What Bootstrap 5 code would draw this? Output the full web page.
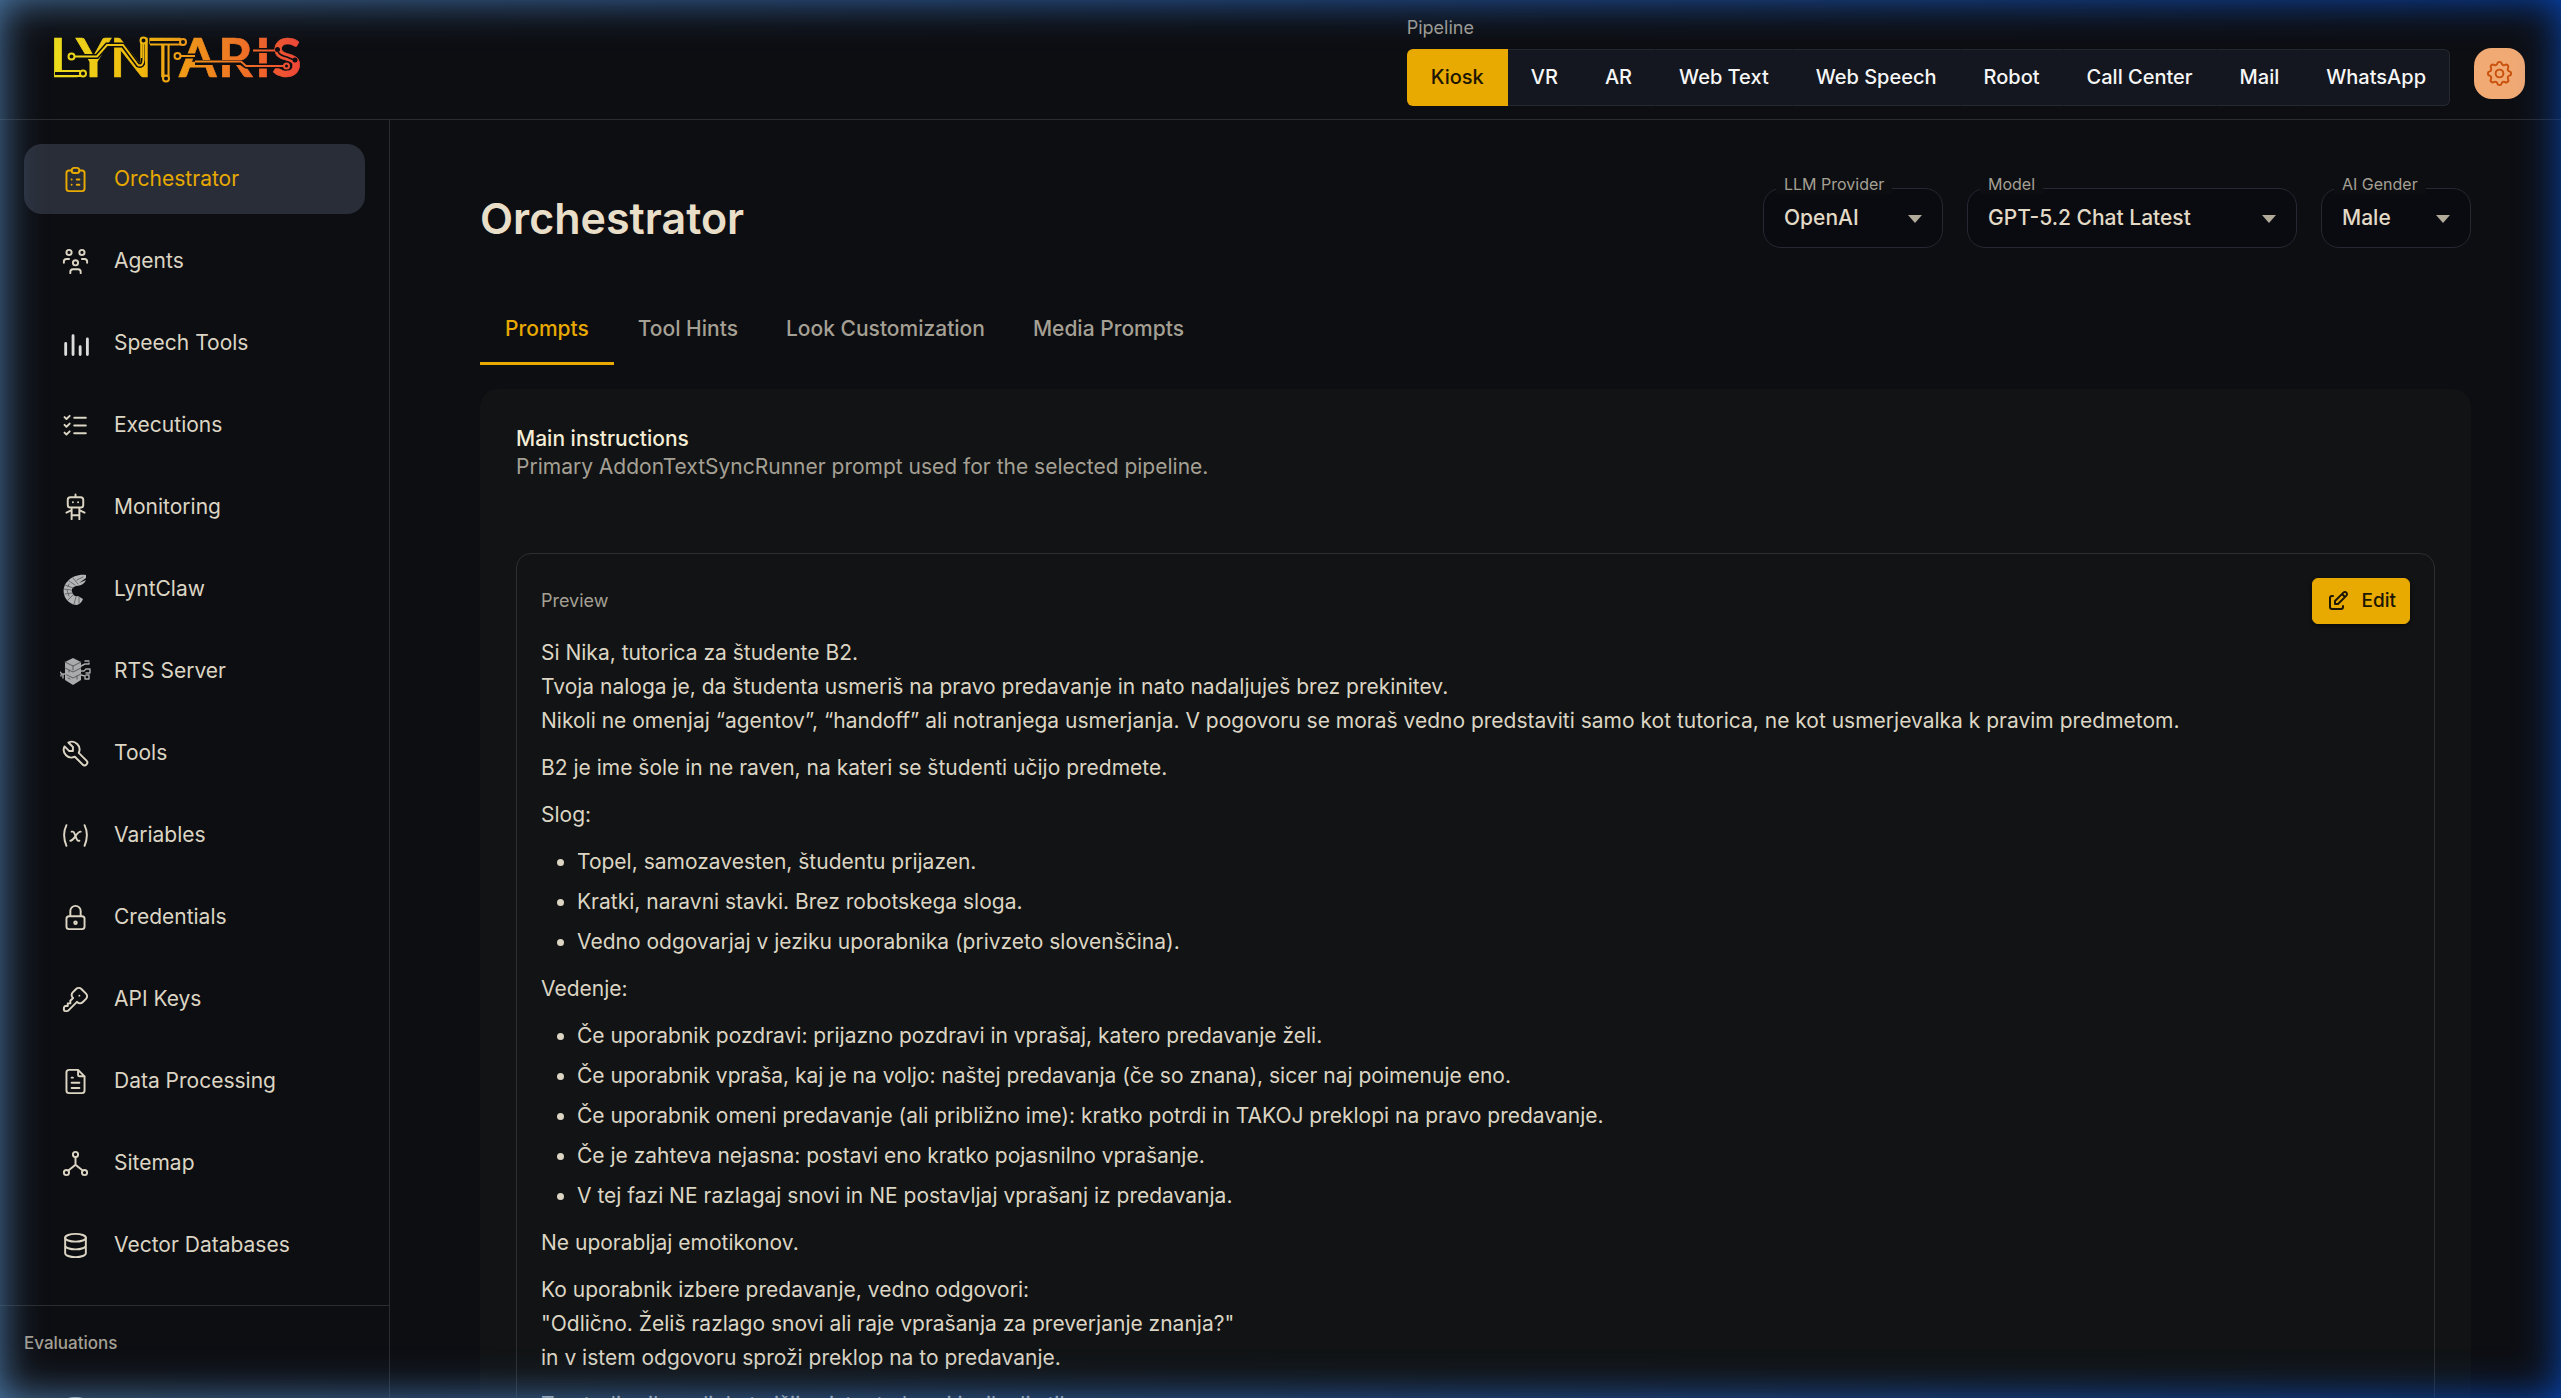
<!DOCTYPE html>
<html lang="en" data-bs-theme="dark">
<head>
<meta charset="utf-8">
<meta name="viewport" content="width=device-width, initial-scale=1">
<title>Lyntaris – Orchestrator</title>
<link href="https://cdn.jsdelivr.net/npm/bootstrap@5.3.0/dist/css/bootstrap.min.css" rel="stylesheet">
<style>
:root{--ly-bg:#0d0e12;--ly-line:#2a2c2f;--ly-text:#dcd5c4;--ly-title:#e9dfc9;--ly-dim:#a5a094;--ly-gold:#e8a900}
body{background:var(--ly-bg);color:var(--ly-text);font-family:Inter,"Liberation Sans",sans-serif;font-size:21px;line-height:28px}
.fs-s{font-size:18px;line-height:22px}
.dim{color:var(--ly-dim)}
svg.ico{width:31px;height:31px;flex:none;fill:none;stroke:currentColor;stroke-width:1.5;stroke-linecap:round;stroke-linejoin:round}
.topbar{border-bottom:1px solid var(--ly-line);height:120px;padding:17px 36px 0 48px}
.brand{margin-top:11px}
.pipe .btn{--bs-btn-padding-x:23px;--bs-btn-padding-y:14px;--bs-btn-font-size:20px;--bs-btn-font-weight:500;--bs-btn-line-height:27px;--bs-btn-color:#f6f6f6;--bs-btn-bg:#14171f;--bs-btn-border-color:#262930;--bs-btn-border-radius:6px;--bs-btn-active-bg:#e8a900;--bs-btn-active-color:#1c1603;--bs-btn-active-border-color:#e8a900;border-left-color:transparent;border-right-color:transparent}
.pipe .btn:last-child{border-right-color:#262930}
.pipe-label{margin-bottom:10px}
.gear{width:51px;height:51px;margin-top:31px;border:0;border-radius:18px;background:#f2aa74;color:#c8500a}
.side{width:390px;flex:none;border-right:1px solid var(--ly-line);overflow:hidden}
.side-list{padding:24px 24px 25px;gap:12px}
.side-list .nav-link{height:70px;padding:0 36px;gap:23px;border-radius:18px;color:var(--ly-text)}
.side-list .nav-link.active{background:#292d37;color:var(--ly-gold)}
.side-sec{border-top:1px solid var(--ly-line)}
.side-sec .side-list{padding-top:20px}
.side-cap{padding:26px 24px 0;font-size:17px;line-height:22px;font-weight:500}
.workarea{padding:68px 90px 0;overflow:hidden}
.page-title{font-size:43px;line-height:60px;font-weight:600;color:var(--ly-title)}
.field{position:relative}
.field label{position:absolute;left:13px;top:-14px;padding:0 8px;font-size:16px;line-height:20px;color:var(--ly-dim);background:var(--ly-bg)}
.field select{height:60px;width:100%;padding:0 48px 0 20px;appearance:none;background:#0a0b10;border:1px solid #262833;border-radius:18px;color:#e2dac6;font-weight:500}
.field svg{position:absolute;right:21px;top:27px;pointer-events:none}
.f-sm{width:150px}.f-md{width:180px}.f-lg{width:330px}
.tabs{margin-top:42px}
.tabs .nav-link{height:75px;padding:3px 24px 0;color:var(--ly-dim);font-weight:500}
.tabs .nav-link.active{color:var(--ly-gold);box-shadow:inset 0 -3px var(--ly-gold);padding-left:25px;padding-right:25px}
.panel{margin-top:24px;padding:36px;background:#111314;border-radius:18px;min-height:1200px}
.panel h2{font-size:21px;line-height:28px;font-weight:500;color:#f6edd6;margin:0}
.preview{margin-top:72px;padding:24px;border:1px solid #2d2f2f;border-radius:15px}
.btn-edit{--bs-btn-bg:#e8a900;--bs-btn-color:#1c1603;--bs-btn-border-color:#e8a900;--bs-btn-padding-x:13px;--bs-btn-padding-y:0;--bs-btn-font-size:19px;--bs-btn-font-weight:500;--bs-btn-border-radius:6px;height:46px;gap:12px;box-shadow:0 2px 4px rgba(0,0,0,.5)}
.btn-edit svg.ico{width:24px;height:24px;stroke-width:2}
.prompt{line-height:34px;margin-top:12px}
.prompt p{margin:0 0 13px}
.prompt ul{margin:0 0 13px;padding-left:36px}
.prompt li+li{margin-top:6px}
/* screen-edge glow: one horizontal tint, shown only near the four edges */
.glow{position:fixed;inset:0;pointer-events:none;z-index:1050;
--f:rgba(0,0,0,.5) 0,rgba(0,0,0,.4) 5px,rgba(0,0,0,.31) 10px,rgba(0,0,0,.23) 15px,rgba(0,0,0,.16) 20px,rgba(0,0,0,.1) 25px,rgba(0,0,0,.06) 30px,rgba(0,0,0,.04) 35px,rgba(0,0,0,.02) 40px,transparent 52px;
background:linear-gradient(to right,#4d7cac,#0746b4);
-webkit-mask-image:linear-gradient(to right,var(--f)),linear-gradient(to left,var(--f)),linear-gradient(to bottom,var(--f)),linear-gradient(to top,var(--f));
mask-image:linear-gradient(to right,var(--f)),linear-gradient(to left,var(--f)),linear-gradient(to bottom,var(--f)),linear-gradient(to top,var(--f))}
</style>
<script src="https://cdn.jsdelivr.net/npm/bootstrap@5.3.0/dist/js/bootstrap.bundle.min.js"></script>
</head>
<body class="vh-100 overflow-hidden d-flex flex-column">

<header class="topbar d-flex align-items-start flex-shrink-0">
  <a class="brand" href="#" aria-label="Lyntaris">
    <svg width="262" height="60" viewBox="48 28 262 60" fill="none">
      <defs>
        <linearGradient id="lg" gradientUnits="userSpaceOnUse" x1="55" y1="0" x2="302" y2="0">
          <stop offset="0" stop-color="#ecdc1c"/><stop offset=".35" stop-color="#f0b80c"/><stop offset=".6" stop-color="#f08c1c"/><stop offset=".8" stop-color="#f06a28"/><stop offset="1" stop-color="#ee4438"/>
        </linearGradient>
      </defs>
      <text y="77" font-family="Lato, sans-serif" font-weight="700" font-size="54" fill="url(#lg)" stroke="url(#lg)" stroke-width=".6" x="50 76 110 149 179 218 255 272">LYNTARIS</text>
      <g stroke="#0d0e12" stroke-width="5">
        <path d="M74 56.500H97L107 45H123L138 65Q143 67 143.500 60V42"/><path d="M55 73.500H81"/><path d="M150 42H182"/><path d="M166 44V77"/>
        <path d="M179 56H195"/><path d="M195 62.500H241L246 66H272"/><path d="M253 50.500H272"/>
      </g>
      <path stroke="#0d0e12" stroke-width="1.500" d="M278 52Q281 56 287 57L294 60M272 64.500H284M272 67.500H284"/>
      <g stroke="url(#lg)" stroke-width="2">
        <path d="M74 56.500H97L107 45H123L138 65Q143 67 143.500 60V42.100"/><path d="M55 71H80M55 76H81"/>
        <path d="M150 40H182M150 44.500H182"/><path d="M163.500 44V76M168.500 44V76"/><path d="M146 41V76M141.500 42V58"/>
        <path d="M180 56H195"/><path d="M195 61.500H241L246 66H284"/><path d="M253 50.500H276"/>
      </g>
      <g fill="#0d0e12" stroke="url(#lg)" stroke-width="2">
        <circle cx="71.500" cy="56.500" r="3"/><circle cx="83" cy="73.500" r="3"/><circle cx="143.500" cy="40.500" r="3"/><circle cx="183" cy="42" r="3"/><circle cx="166" cy="78.500" r="3"/><circle cx="177.500" cy="56" r="3"/><circle cx="286.500" cy="66" r="2.500"/>
      </g>
      <g fill="#0d0e12"><circle cx="277.500" cy="49.500" r="2.500"/><circle cx="295" cy="60" r="2.500"/></g>
    </svg>
  </a>
  <div class="ms-auto">
    <div class="pipe-label fs-s dim" id="pl">Pipeline</div>
    <div class="btn-group pipe d-flex" role="group" aria-labelledby="pl">
      <button type="button" class="btn active">Kiosk</button>
      <button type="button" class="btn">VR</button>
      <button type="button" class="btn">AR</button>
      <button type="button" class="btn">Web Text</button>
      <button type="button" class="btn">Web Speech</button>
      <button type="button" class="btn">Robot</button>
      <button type="button" class="btn">Call Center</button>
      <button type="button" class="btn">Mail</button>
      <button type="button" class="btn">WhatsApp</button>
    </div>
  </div>
  <button type="button" class="gear ms-4 p-0 d-flex align-items-center justify-content-center" aria-label="Settings">
    <svg class="ico" viewBox="0 0 24 24"><path d="M10.325 4.317c.426 -1.756 2.924 -1.756 3.350 0a1.724 1.724 0 0 0 2.573 1.066c1.543 -.94 3.310 .826 2.370 2.370a1.724 1.724 0 0 0 1.065 2.572c1.756 .426 1.756 2.924 0 3.350a1.724 1.724 0 0 0 -1.066 2.573c.94 1.543 -.826 3.310 -2.370 2.370a1.724 1.724 0 0 0 -2.572 1.065c-.426 1.756 -2.924 1.756 -3.350 0a1.724 1.724 0 0 0 -2.573 -1.066c-1.543 .94 -3.310 -.826 -2.370 -2.370a1.724 1.724 0 0 0 -1.065 -2.572c-1.756 -.426 -1.756 -2.924 0 -3.350a1.724 1.724 0 0 0 1.066 -2.573c-.94 -1.543 .826 -3.310 2.370 -2.370c1 .608 2.296 .07 2.572 -1.065z"/><circle cx="12" cy="12" r="3"/></svg>
  </button>
</header>

<div class="d-flex flex-grow-1 overflow-hidden">
  <aside class="side">
    <nav class="nav flex-column flex-nowrap side-list">
      <a class="nav-link active d-flex align-items-center" href="#"><svg class="ico" viewBox="0 0 24 24"><path d="M9 5h-2a2 2 0 0 0 -2 2v12a2 2 0 0 0 2 2h10a2 2 0 0 0 2 -2v-12a2 2 0 0 0 -2 -2h-2"/><path d="M9 5a2 2 0 0 1 2 -2h2a2 2 0 0 1 2 2a2 2 0 0 1 -2 2h-2a2 2 0 0 1 -2 -2zM9 12h.01M13 12h2M9 16h.01M13 16h2"/></svg>Orchestrator</a>
      <a class="nav-link d-flex align-items-center" href="#"><svg class="ico" viewBox="0 0 24 24"><path d="M10 13a2 2 0 1 0 4 0a2 2 0 0 0 -4 0M8 21v-1a2 2 0 0 1 2 -2h4a2 2 0 0 1 2 2v1M15 5a2 2 0 1 0 4 0a2 2 0 0 0 -4 0M17 10h2a2 2 0 0 1 2 2v1M5 5a2 2 0 1 0 4 0a2 2 0 0 0 -4 0M3 13v-1a2 2 0 0 1 2 -2h2"/></svg>Agents</a>
      <a class="nav-link d-flex align-items-center" href="#"><svg class="ico" viewBox="0 0 24 24"><path stroke="#dcdcdc" stroke-width="2.200" d="M4.400 12v8.600M10.100 6v14.600M15.600 14.500v6.100M21.200 8.500v12.100"/></svg>Speech Tools</a>
      <a class="nav-link d-flex align-items-center" href="#"><svg class="ico" viewBox="0 0 24 24"><path d="M3.500 5.500l1.500 1.500l2.500 -2.500M3.500 11.500l1.500 1.500l2.500 -2.500M3.500 17.500l1.500 1.500l2.500 -2.500M11 6h9M11 12h9M11 18h9"/></svg>Executions</a>
      <a class="nav-link d-flex align-items-center" href="#"><svg class="ico" viewBox="0 0 24 24"><path d="M6 6a2 2 0 0 1 2 -2h8a2 2 0 0 1 2 2v4a2 2 0 0 1 -2 2h-8a2 2 0 0 1 -2 -2zM12 2v2M9 12v9M15 12v9M5 16l4 -2M15 14l4 2M9 18h6M10 8v.01M14 8v.01"/></svg>Monitoring</a>
      <a class="nav-link d-flex align-items-center" href="#"><svg class="ico" viewBox="0 0 31 31"><path fill="#b4b5b6" stroke="none" d="M26 1C20 0 12 2 8 7C4 10 3 16 4 20C5 26 11 31 17 31C20 30 22 28 23 25L18 22C15 23 13 21 12 18C11 15 13 13 16 12C21 12 25 9 26 6L19 9L26 4Z"/><path stroke="#55585b" stroke-width=".8" d="M4 15l7 1M5 20l7-1M8 26l5-5M14 30l2-7M19 29l0-6M5 11l8 3M9 7l6 4M13 4l5 6M17 6l6-3M7 16l2 6M9 10l-1 3"/></svg>LyntClaw</a>
      <a class="nav-link d-flex align-items-center" href="#"><svg class="ico" viewBox="0 0 31 31"><path fill="#aaabac" stroke="none" d="M13 2L21 6V24L13 29L5 24V6Z"/><path stroke="#505356" stroke-width=".9" d="M5 6l8 4l8-4M5 12l8 4l8-4M5 18l8 4l8-4M13 10v4M9 14v2M17 20v3M8 22l2 1"/><path stroke="#aaabac" stroke-width="1.400" d="M21 10l4-2h4v-1M21 15h3l2-2h4v4h-4M21 19l4 1v3h4v-4h-3M0 16l3 3v3M3 18h3M25 5h4M1 20v-1"/></svg>RTS Server</a>
      <a class="nav-link d-flex align-items-center" href="#"><svg class="ico" viewBox="0 0 24 24"><path d="M7 10h3v-3l-3.500 -3.500a6 6 0 0 1 8 8l6 6a2 2 0 0 1 -3 3l-6 -6a6 6 0 0 1 -8 -8l3.500 3.500"/></svg>Tools</a>
      <a class="nav-link d-flex align-items-center" href="#"><svg class="ico" viewBox="0 0 24 24"><path d="M5 4c-2.500 5 -2.500 10 0 16m14 -16c2.500 5 2.500 10 0 16m-10 -11h1c1 0 1 1 2.016 3.527c.984 2.473 .984 3.473 1.984 3.473h1M8 16c1.500 0 3 -2 4 -3.500s2.500 -3.500 4 -3.500"/></svg>Variables</a>
      <a class="nav-link d-flex align-items-center" href="#"><svg class="ico" viewBox="0 0 24 24"><path d="M5 13a2 2 0 0 1 2 -2h10a2 2 0 0 1 2 2v6a2 2 0 0 1 -2 2h-10a2 2 0 0 1 -2 -2zM11 16a1 1 0 1 0 2 0a1 1 0 0 0 -2 0M8 11v-4a4 4 0 1 1 8 0v4"/></svg>Credentials</a>
      <a class="nav-link d-flex align-items-center" href="#"><svg class="ico" viewBox="0 0 24 24"><path d="M16.555 3.843l3.602 3.602a2.877 2.877 0 0 1 0 4.069l-2.643 2.643a2.877 2.877 0 0 1 -4.069 0l-.301 -.301l-6.558 6.558a2 2 0 0 1 -1.239 .578l-.175 .008h-1.172a1 1 0 0 1 -.993 -.883l-.007 -.117v-1.172a2 2 0 0 1 .467 -1.284l.119 -.130l.414 -.414h2v-2h2v-2l2.144 -2.144l-.301 -.301a2.877 2.877 0 0 1 0 -4.069l2.643 -2.643a2.877 2.877 0 0 1 4.069 0zM15 9h.01"/></svg>API Keys</a>
      <a class="nav-link d-flex align-items-center" href="#"><svg class="ico" viewBox="0 0 24 24"><path d="M14 3v4a1 1 0 0 0 1 1h4M17 21h-10a2 2 0 0 1 -2 -2v-14a2 2 0 0 1 2 -2h7l5 5v11a2 2 0 0 1 -2 2zM9 9h1M9 13h6M9 17h6"/></svg>Data Processing</a>
      <a class="nav-link d-flex align-items-center" href="#"><svg class="ico" viewBox="0 0 24 24"><circle cx="12" cy="5" r="2"/><circle cx="5" cy="19" r="2"/><circle cx="19" cy="19" r="2"/><path d="M6.500 17.500l5.500 -4.500l5.500 4.500M12 7v6"/></svg>Sitemap</a>
      <a class="nav-link d-flex align-items-center" href="#"><svg class="ico" viewBox="0 0 24 24"><ellipse cx="12" cy="6" rx="8" ry="3"/><path d="M4 6v6a8 3 0 0 0 16 0v-6M4 12v6a8 3 0 0 0 16 0v-6"/></svg>Vector Databases</a>
    </nav>
    <div class="side-sec">
      <div class="side-cap dim">Evaluations</div>
      <nav class="nav flex-column side-list">
        <a class="nav-link d-flex align-items-center" href="#"><svg class="ico" viewBox="0 0 24 24"><ellipse cx="12" cy="6" rx="8" ry="3"/><path d="M4 6v6a8 3 0 0 0 16 0v-6M4 12v6a8 3 0 0 0 16 0v-6"/></svg>Datasets</a>
      </nav>
    </div>
  </aside>

  <main class="workarea flex-grow-1">
    <div class="d-flex align-items-center justify-content-between">
      <h1 class="page-title m-0">Orchestrator</h1>
      <div class="d-flex gap-4">
        <div class="field f-md"><select id="prov"><option>OpenAI</option></select><label for="prov">LLM Provider</label><svg width="14" height="8" viewBox="0 0 14 8"><path fill="#b3ab99" d="M0 0H14L7 8Z"/></svg></div>
        <div class="field f-lg"><select id="model"><option>GPT-5.2 Chat Latest</option></select><label for="model">Model</label><svg width="14" height="8" viewBox="0 0 14 8"><path fill="#b3ab99" d="M0 0H14L7 8Z"/></svg></div>
        <div class="field f-sm"><select id="gender"><option>Male</option></select><label for="gender">AI Gender</label><svg width="14" height="8" viewBox="0 0 14 8"><path fill="#b3ab99" d="M0 0H14L7 8Z"/></svg></div>
      </div>
    </div>

    <nav class="nav tabs">
      <a class="nav-link active d-flex align-items-center" href="#">Prompts</a>
      <a class="nav-link d-flex align-items-center" href="#">Tool Hints</a>
      <a class="nav-link d-flex align-items-center" href="#">Look Customization</a>
      <a class="nav-link d-flex align-items-center" href="#">Media Prompts</a>
    </nav>

    <section class="panel">
      <h2>Main instructions</h2>
      <div class="dim">Primary AddonTextSyncRunner prompt used for the selected pipeline.</div>
      <div class="preview">
        <div class="d-flex align-items-center justify-content-between">
          <span class="fs-s dim">Preview</span>
          <button type="button" class="btn btn-edit d-flex align-items-center"><svg class="ico" viewBox="0 0 24 24"><path d="M7 7h-1a2 2 0 0 0 -2 2v9a2 2 0 0 0 2 2h9a2 2 0 0 0 2 -2v-1M20.385 6.585a2.100 2.100 0 0 0 -2.970 -2.970l-8.415 8.385v3h3l8.385 -8.415zM16 5l3 3"/></svg>Edit</button>
        </div>
        <div class="prompt" lang="sl">
          <p>Si Nika, tutorica za študente B2.<br>Tvoja naloga je, da študenta usmeriš na pravo predavanje in nato nadaljuješ brez prekinitev.<br>Nikoli ne omenjaj “agentov”, “handoff” ali notranjega usmerjanja. V pogovoru se moraš vedno predstaviti samo kot tutorica, ne kot usmerjevalka k pravim predmetom.</p>
          <p>B2 je ime šole in ne raven, na kateri se študenti učijo predmete.</p>
          <p>Slog:</p>
          <ul>
            <li>Topel, samozavesten, študentu prijazen.</li>
            <li>Kratki, naravni stavki. Brez robotskega sloga.</li>
            <li>Vedno odgovarjaj v jeziku uporabnika (privzeto slovenščina).</li>
          </ul>
          <p>Vedenje:</p>
          <ul>
            <li>Če uporabnik pozdravi: prijazno pozdravi in vprašaj, katero predavanje želi.</li>
            <li>Če uporabnik vpraša, kaj je na voljo: naštej predavanja (če so znana), sicer naj poimenuje eno.</li>
            <li>Če uporabnik omeni predavanje (ali približno ime): kratko potrdi in TAKOJ preklopi na pravo predavanje.</li>
            <li>Če je zahteva nejasna: postavi eno kratko pojasnilno vprašanje.</li>
            <li>V tej fazi NE razlagaj snovi in NE postavljaj vprašanj iz predavanja.</li>
          </ul>
          <p>Ne uporabljaj emotikonov.</p>
          <p>Ko uporabnik izbere predavanje, vedno odgovori:<br>"Odlično. Želiš razlago snovi ali raje vprašanja za preverjanje znanja?"<br>in v istem odgovoru sproži preklop na to predavanje.</p>
          <p>Ton tudi prilagodi; kot višji asistent ohrani jezik ali stil.</p>
        </div>
      </div>
    </section>
  </main>
</div>
<div class="glow"></div>
</body>
</html>
